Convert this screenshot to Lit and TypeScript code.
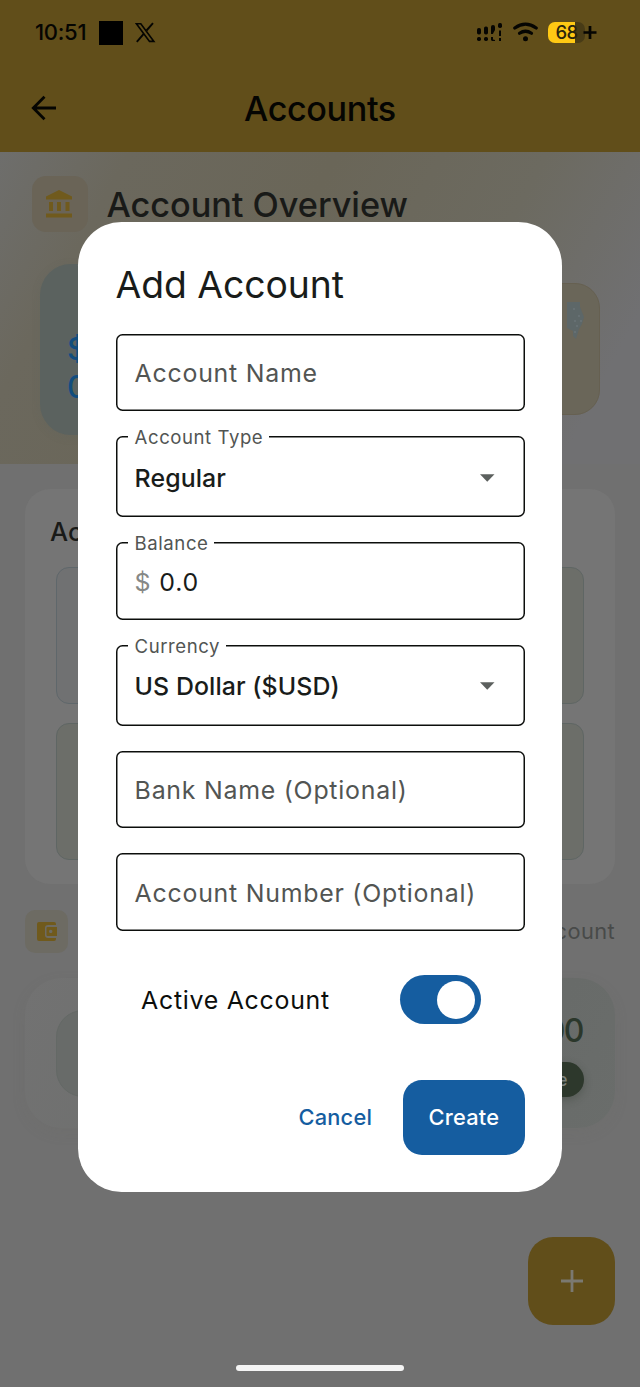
import { LitElement, html, css, svg } from "lit";
import { customElement, property, state } from "lit/decorators.js";
import { classMap } from "lit/directives/class-map.js";

@customElement("status-bar")
class StatusBar extends LitElement {
  static styles = css`
    :host { display: flex; justify-content: space-between; height: 65px; box-sizing: border-box; padding: 21px 43px 0 35px; }
    .side { display: flex; align-items: flex-start; }
    .time { width: 64px; font-size: 22px; line-height: 23px; font-weight: 500; letter-spacing: -0.3px; color: #050502; }
    .square { width: 24px; height: 24px; background: #000; margin-right: 12px; }
    svg { display: block; }
    .signal { margin-right: 10px; }
    .wifi { margin-right: 10px; }
    .battery { display: flex; align-items: center; justify-content: center; width: 37px; height: 21px; margin-top: 1px; border-radius: 7px;
      background: linear-gradient(90deg, #ffc914 0 27px, #483b16 27px); font-size: 18.5px; line-height: 21px; font-weight: 500; letter-spacing: -0.6px; color: #2b260c; box-sizing: border-box; }
    .plus { margin: 5px 0 0 -2px; }
  `;
  render() {
    return html`
      <div class="side">
        <span class="time">10:51</span>
        <span class="square"></span>
        <svg width="21" height="24" viewBox="0 0 21 24" fill="none" stroke="#050502">
          <path d="M1.4 2.800H5.800L18.900 20.400H14.500Z" stroke-width="1.600" />
          <path d="M18 2.200L11.500 9.500M8.700 12.900L1.800 20.800" stroke-width="1.900" />
        </svg>
      </div>
      <div class="side">
        <svg class="signal" width="27" height="22" viewBox="0 0 27 22" fill="#050502">
          <rect x="1" y="7" width="4" height="6.5" rx="1.8" /><rect x="1" y="16" width="4" height="4" rx="1.7" />
          <rect x="8" y="5.5" width="4" height="8" rx="1.8" /><rect x="8" y="16" width="4" height="4" rx="1.7" />
          <path d="M15 6q0-2 2-2t2 2v3l-2.2 4H15z" /><path d="M15 16h2v2.500l2 .5v1h-3l-1-1z" />
          <rect x="22" y="2" width="4" height="5" rx="1.7" /><rect x="23" y="9.500" width="2" height="5.500" /><rect x="23" y="17" width="2" height="3" />
        </svg>
        <svg class="wifi" width="25" height="22" viewBox="0 0 25 22" fill="none" stroke="#050502" stroke-width="3.200" stroke-linecap="round">
          <path d="M1.800 7Q12.500-.7 23.200 7" /><path d="M6.500 12.300Q12.500 8.200 18.500 12.300" />
          <circle cx="12.500" cy="17.800" r="2.500" fill="#050502" stroke="none" />
        </svg>
        <span class="battery">68</span>
        <svg class="plus" width="14" height="14" viewBox="0 0 14 14" stroke="#050502" stroke-width="2.700"><path d="M.5 6.500h13M7 0v13" /></svg>
      </div>
    `;
  }
}

@customElement("outlined-field")
class OutlinedField extends LitElement {
  @property() label = "";
  @property() value = "";
  @property() prefixText = "";
  @property({ type: Boolean }) select = false;
  static styles = css`
    :host { display: block; }
    .box { position: relative; display: flex; align-items: center; height: 77.300px; box-sizing: border-box; box-shadow: inset 0 0 0 1.500px #0c0e0c; border-radius: 6.500px; padding: 2px 19px 0; font-size: 24.900px; font-weight: 400; letter-spacing: 0.750px; color: #191c1a; }
    .tall { height: 80.800px; }
    .hint { color: #525553; }
    .float { position: absolute; left: 12px; top: -11px; height: 24px; line-height: 24px; padding: 0 6px 0 7px; background: #fff; font-size: 18.600px; color: #525553; letter-spacing: 0.550px; white-space: nowrap; }
    .prefix { color: #868886; margin-right: 8px; }
    .select { font-weight: 500; letter-spacing: 0.070px; flex: 1; }
    .arrow { width: 14.500px; height: 8px; margin-right: 11px; }
  `;
  render() {
    return html`<div class=${classMap({ box: true, tall: this.select })}>
      ${this.value
        ? html`<span class="float">${this.label}</span>
            ${this.prefixText ? html`<span class="prefix">${this.prefixText}</span>` : null}
            <span class=${classMap({ select: this.select })}>${this.value}</span>
            ${this.select ? html`<svg class="arrow" viewBox="0 0 15 8"><path d="M0 0h15L7.500 8z" fill="#5c605e" /></svg>` : null}`
        : html`<span class="hint">${this.label}</span>`}
    </div>`;
  }
}

@customElement("account-dialog")
class AccountDialog extends LitElement {
  @state() private active = true;
  static styles = css`
    :host { display: flex; flex-direction: column; box-sizing: border-box; width: 484px; height: 970.500px; padding: 38px 37.400px 0 37.600px; border-radius: 43.500px; background: #fff; }
    h2 { margin: 0 0 24.300px 0; font-size: 37.300px; line-height: 50px; font-weight: 400; letter-spacing: -0.050px; color: #191c1a; }
    .fields { display: flex; flex-direction: column; gap: 25.200px; }
    .toggle-row { display: flex; align-items: center; justify-content: space-between; margin-top: 44px; padding: 0 43.500px 0 25.500px; height: 50px; font-size: 24.900px; letter-spacing: 0.720px; color: #0c0e0c; }
    .switch { display: flex; justify-content: flex-start; align-items: center; width: 81px; height: 49.700px; box-sizing: border-box; padding: 0 6px; border-radius: 25px; background: #155da0; }
    .on { justify-content: flex-end; }
    .thumb { width: 38px; height: 38px; border-radius: 50%; background: #fff; }
    .actions { display: flex; justify-content: flex-end; align-items: center; margin-top: 55px; font-size: 21.800px; font-weight: 500; letter-spacing: 0.200px; line-height: 28px; color: #155da0; }
    .cancel { margin-right: 31px; }
    .create { display: flex; align-items: center; justify-content: center; width: 121.500px; height: 75px; border-radius: 19px; background: #155da0; color: #fff; }
  `;
  render() {
    return html`
      <h2>Add Account</h2>
      <div class="fields">
        <outlined-field label="Account Name"></outlined-field>
        <outlined-field label="Account Type" value="Regular" select></outlined-field>
        <outlined-field label="Balance" value="0.0" .prefixText=${"$"}></outlined-field>
        <outlined-field label="Currency" value="US Dollar ($USD)" select></outlined-field>
        <outlined-field label="Bank Name (Optional)"></outlined-field>
        <outlined-field label="Account Number (Optional)"></outlined-field>
      </div>
      <div class="toggle-row">
        <span>Active Account</span>
        <span class=${classMap({ switch: true, on: this.active })} @click=${() => (this.active = !this.active)}><span class="thumb"></span></span>
      </div>
      <div class="actions"><span class="cancel">Cancel</span><span class="create">Create</span></div>
    `;
  }
}

const bankIcon = svg`<path d="M13 0L26 6.500V9.500H0V6.500ZM3 12h4v9H3ZM11 12h4v9h-4ZM19.500 12h4v9h-4ZM0 23.500h26v4H0Z" />`;
const walletIcon = svg`<path fill-rule="evenodd" d="M2 0h15q2 0 2 2v1h-8q-3 0-3 3v7q0 3 3 3h8v1q0 2-2 2H2q-2 0-2-2V2q0-2 2-2ZM10.500 5H20v9h-9.500q-1 0-1-1V6q0-1 1-1ZM13.700 7.700a1.700 1.700 0 1 0 .01 0Z" />`;

@customElement("app-root")
class AppRoot extends LitElement {
  static styles = css`
    :host { position: relative; display: flex; flex-direction: column; width: 640px; height: 1387px; overflow: hidden; background: #707070; font-family: Inter, sans-serif; }
    header { height: 152px; background: #614e1a; flex: none; }
    .bar { display: grid; grid-template-columns: 60px 1fr 60px; align-items: center; height: 86px; padding: 0 31px; }
    .bar h1 { margin: 0; text-align: center; font-size: 34.200px; font-weight: 500; color: #050502; letter-spacing: -0.400px; }
    .overview { flex: none; height: 312px; box-sizing: border-box; padding: 24px 40px 0 31.500px; background: linear-gradient(118deg, #6e6e6c 0%, #6b685d 16%, #6a6658 42%, #6c6a60 68%, #707072 90%); }
    .heading { display: flex; align-items: center; gap: 19px; height: 56px; }
    .badge { display: flex; align-items: center; justify-content: center; width: 56px; height: 56px; border-radius: 14px; background: #6a6457; fill: #705a1d; }
    .badge svg { margin-right: 1px; }
    h2 { margin: 0; font-size: 34.300px; font-weight: 500; letter-spacing: -0.050px; color: #191a18; }
    .totals { display: flex; align-items: center; justify-content: space-between; height: 171px; margin: 31.500px 0 0 8.500px; }
    .total { box-sizing: border-box; width: 172px; height: 171px; padding: 66px 27px 0; border-radius: 31px; background: #5b625f; color: #124d7e; font-size: 31px; line-height: 38px; font-weight: 500; box-shadow: 0 2px 8px #5b625f33; }
    .count { box-sizing: border-box; width: 170px; height: 132px; border: 1px solid #666051; border-radius: 25px; background: #6a6659; padding: 17px 15px; display: flex; justify-content: flex-end; }
    .panel { flex: none; margin: 25px 25px 0; height: 395px; box-sizing: border-box; padding: 25px 31px; border-radius: 25px; background: #757575; }
    h3 { margin: 0 0 17px -6px; font-size: 25.500px; line-height: 36px; font-weight: 500; color: #191a18; }
    .tiles { display: grid; grid-template-columns: 1fr 1fr; gap: 19px; }
    .tile { height: 137px; box-sizing: border-box; border: 1.500px solid #5f6664; border-radius: 13px; background: #6c6e69; }
    .blue { background: #707172; border-color: #5f676b; }
    .list-head { display: flex; align-items: center; justify-content: space-between; margin: 26px 25px 0; height: 43px; color: #484a49; font-size: 21.800px; letter-spacing: 0.400px; line-height: 24px; }
    .tally { padding-bottom: 1px; }
    .wallet { display: flex; align-items: center; justify-content: center; width: 43px; height: 43px; border-radius: 10px; background: #6d6b63; fill: #705a1c; }
    .account { display: flex; align-items: center; justify-content: space-between; flex: none; height: 150px; box-sizing: border-box; margin: 25px 25px 0; padding: 0 31px; border-radius: 37px; background: linear-gradient(115deg, #727272, #6f706f 25%, #676a68 75%, #6a6d6b); box-shadow: 0 5px 14px #6a6c6422; }
    .avatar { width: 87px; height: 87px; box-sizing: border-box; border: 1px solid #646966; border-radius: 27px; background: #686b69; }
    .sum { display: flex; flex-direction: column; align-items: flex-end; gap: 11px; padding-top: 1px; color: #2b372b; font-size: 32px; line-height: 40px; font-weight: 500; }
    .amount { letter-spacing: -1.500px; padding-right: 1px; }
    .pill { box-sizing: border-box; height: 35px; padding: 0 16.500px; border-radius: 18px; background: #2d382c; color: #7b807b; font-size: 17px; line-height: 37px; font-weight: 500; box-shadow: 0 3px 8px #2d382c55; }
    .fab { position: absolute; left: 528px; top: 1237px; width: 87px; height: 87.500px; display: flex; align-items: center; justify-content: center; border-radius: 25px; background: #614e1a; }
    .home { position: absolute; left: 236px; top: 1365px; width: 168px; height: 6px; border-radius: 3px; background: #f4f4f4; }
    .dialog { position: absolute; left: 78px; top: 221.500px; }
  `;
  render() {
    return html`
      <header>
        <status-bar></status-bar>
        <div class="bar">
          <svg width="26" height="26" viewBox="0 0 26 26" fill="none" stroke="#050502" stroke-width="2.800"><path d="M25 13H2.500M13.500 1.800L2.300 13L13.500 24.200" /></svg>
          <h1>Accounts</h1>
        </div>
      </header>
      <section class="overview">
        <div class="heading">
          <span class="badge"><svg width="26" height="28" viewBox="0 0 26 28">${bankIcon}</svg></span>
          <h2>Account Overview</h2>
        </div>
        <div class="totals">
          <div class="total">$<br />0</div>
          <div class="count"><svg width="18" height="38" viewBox="0 0 18 38" fill="#5d6768"><path d="M1 1H14V6L18 16L16 23L13 28L10 38L7 35V30L1 27Z" /><g fill="#788287"><circle cx="8" cy="8" r=".7" /><circle cx="13" cy="15" r=".7" /><circle cx="9" cy="20" r=".7" /><circle cx="15" cy="20" r=".7" /><circle cx="11" cy="25" r=".7" /><circle cx="9" cy="31" r=".7" /></g></svg></div>
        </div>
      </section>
      <section class="panel">
        <h3>Acco</h3>
        <div class="tiles">
          <div class="tile blue"></div><div class="tile"></div><div class="tile"></div><div class="tile"></div>
        </div>
      </section>
      <div class="list-head">
        <span class="wallet"><svg width="20" height="19" viewBox="0 0 20 19">${walletIcon}</svg></span>
        <span class="tally">1 account</span>
      </div>
      <section class="account">
        <span class="avatar"></span>
        <div class="sum"><span class="amount">$0.00</span><span class="pill">Active</span></div>
      </section>
      <div class="fab"><svg width="22" height="22" viewBox="0 0 22 22" stroke="#7b7971" stroke-width="2.800"><path d="M0 11h22M11 0v22" /></svg></div>
      <account-dialog class="dialog"></account-dialog>
      <div class="home"></div>
    `;
  }
}
